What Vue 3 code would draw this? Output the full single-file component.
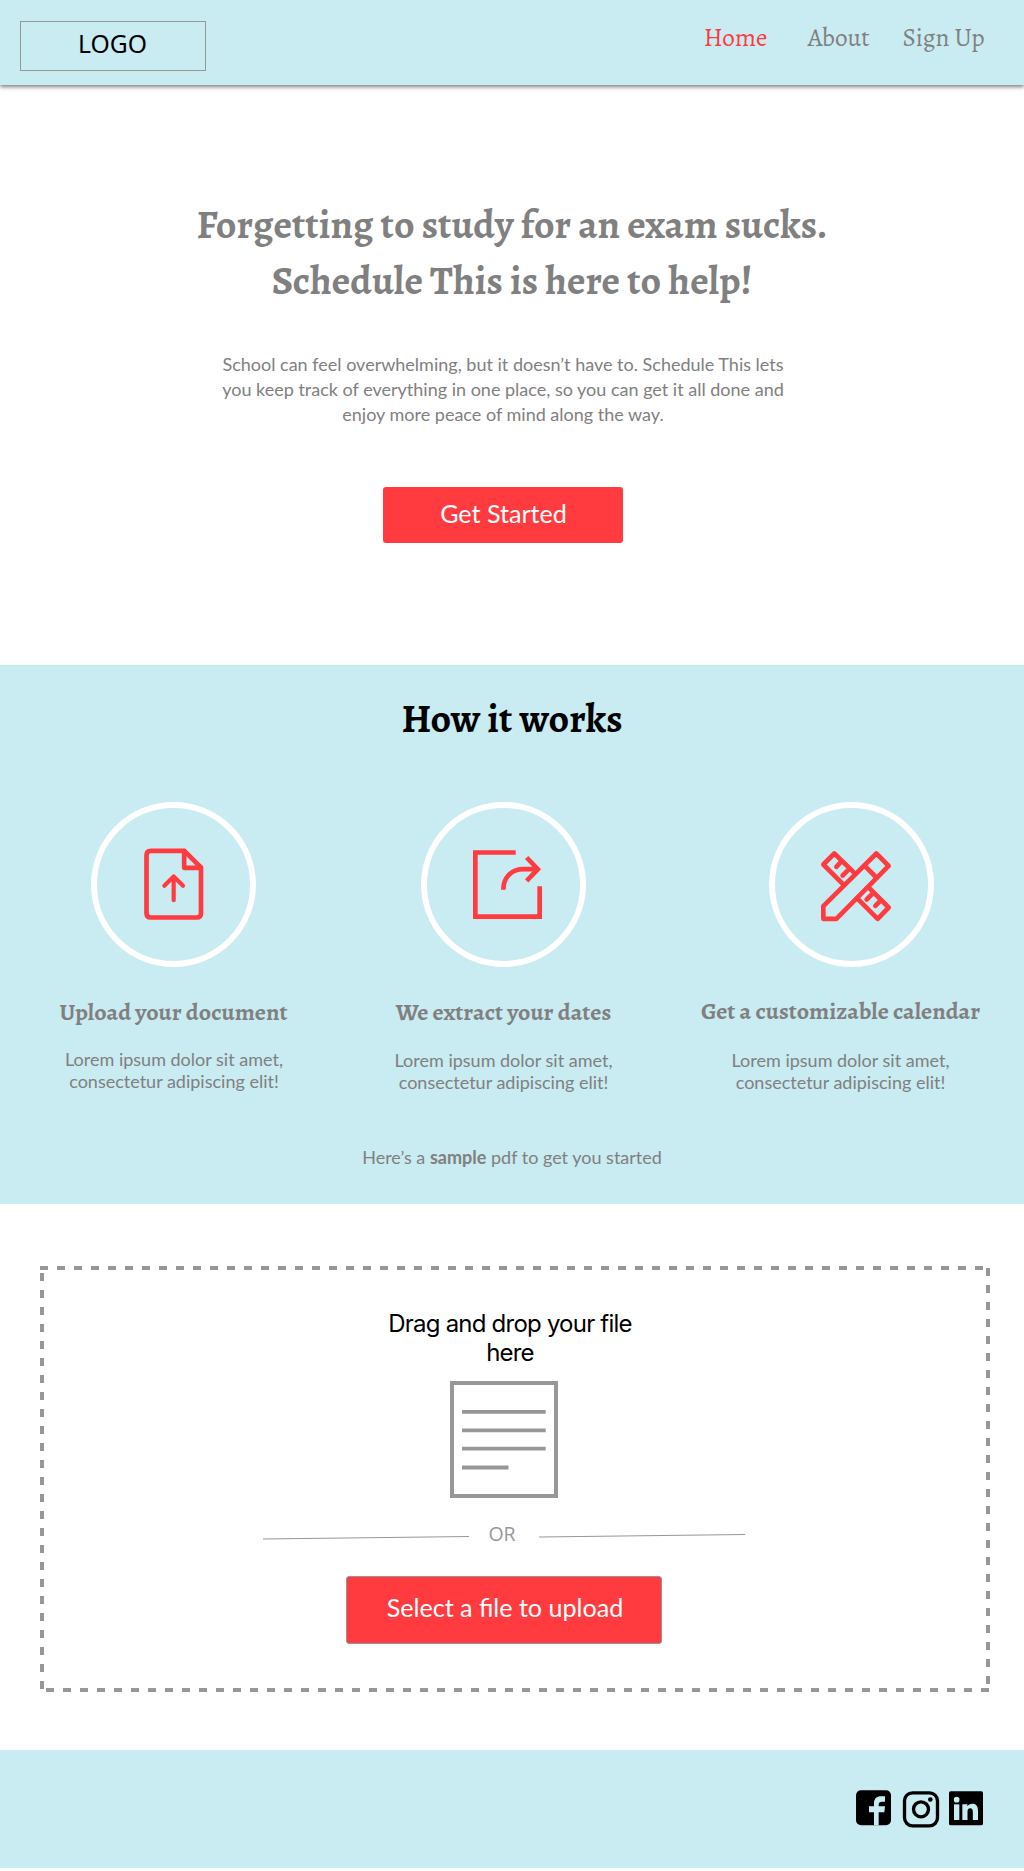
<script setup>
const links = [
  { label: 'Home', cls: 'home' },
  { label: 'About', cls: 'about' },
  { label: 'Sign Up', cls: 'signup' },
]
const steps = [
  { id: 'upload', title: 'Upload your document' },
  { id: 'extract', title: 'We extract your dates' },
  { id: 'calendar', title: 'Get a customizable calendar' },
]
</script>

<template>
  <div class="page">
    <header class="bar">
      <div class="logo">LOGO</div>
      <nav class="nav">
        <a v-for="l in links" :key="l.label" :class="l.cls">{{ l.label }}</a>
      </nav>
    </header>

    <section class="hero">
      <h1>Forgetting to study for an exam sucks.<br />Schedule This is here to help!</h1>
      <p class="intro">School can feel overwhelming, but it doesn’t have to. Schedule This lets<br />you keep track of everything in one place, so you can get it all done and<br />enjoy more peace of mind along the way.</p>
      <button class="btn start">Get Started</button>
    </section>

    <section class="how">
      <h2>How it works</h2>
      <div class="steps">
        <article v-for="s in steps" :key="s.id" class="step" :class="s.id">
          <svg class="ring" viewBox="33 35.5 495 495" width="165" height="165" fill="none" stroke="#ff3b3f">
            <circle cx="280.5" cy="283" r="238.5" stroke="#fff" stroke-width="18" />
            <g v-if="s.id === 'upload'" stroke-width="14" stroke-linecap="round" stroke-linejoin="round">
              <path d="M313 182H212q-12.500 0-12.500 13V369q0 13 12.500 13H350q13 0 13-13V232z" />
              <path d="M312.500 183V233H362" />
              <path d="M281 330V260M253 287l28-28 28 28" stroke-width="12.500" />
            </g>
            <g v-else-if="s.id === 'extract'" stroke-width="14">
              <path d="M317 187H196V379.500H389V288" />
              <path d="M280 299C280 262 304 237 340 237H380" />
              <path d="M350 202l33.500 35-33.500 35" />
            </g>
            <g v-else transform="translate(6 0)" stroke-width="14" stroke-linecap="round" stroke-linejoin="round">
              <path d="M190 386V348L349 190l37 37L229 386z" />
              <path d="M315 228l34 34" />
              <path d="M283 248L223 190l-33 33 61 61" />
              <path d="M241 217l-12 13M264 240l-16 16" />
              <path d="M325 291l61 61-33 34-62-62" />
              <path d="M337 311l-17 17M361 332l-15 15" />
            </g>
          </svg>
          <h3>{{ s.title }}</h3>
          <p>Lorem ipsum dolor sit amet,<br />consectetur adipiscing elit!</p>
        </article>
      </div>
      <p class="sample">Here’s a <b>sample</b> pdf to get you started</p>
    </section>

    <section class="drop">
      <svg class="dashes" width="950" height="428" viewBox="40 1265 950 428" stroke="#979797" stroke-width="4" stroke-dasharray="8 9">
        <path d="M40 1268H984" />
        <path d="M988 1268V1686" />
        <path d="M989 1690H46" />
        <path d="M42 1689V1272" />
      </svg>
      <p class="hint">Drag and drop your file<br />here</p>
      <svg class="doc" width="108" height="117" viewBox="450 1381 108 117" fill="none" stroke="#979797">
        <rect x="452" y="1383" width="104" height="113" stroke-width="4" />
        <path d="M462 1411.800h83.700M462 1430.300h83.700M462 1448.700h83.700M462 1467.500h46.500" stroke-width="3.800" />
      </svg>
      <div class="or">
        <svg class="l" width="206" height="5" viewBox="0 0 206 5"><path d="M0 4L206 1.500" stroke="#979797" /></svg>
        <span>OR</span>
        <svg width="206" height="5" viewBox="0 0 206 5"><path d="M0 4L206 1.500" stroke="#979797" /></svg>
      </div>
      <button class="btn select">Select a file to upload</button>
    </section>

    <footer class="foot">
      <svg width="128" height="38" viewBox="108 152 384 114">
        <rect x="108" y="153" width="105" height="105" rx="15" />
        <path fill="#c9ebf2" d="M162 258V219H147V201H162V192C162 178 170 171 183 171H195V187H187C179 187 176 190 176 197V201H195L193 219H176V258z" />
        <rect x="253.500" y="160.500" width="99" height="99" rx="24" fill="none" stroke="#000" stroke-width="10" />
        <circle cx="303" cy="210" r="22.500" fill="none" stroke="#000" stroke-width="10" />
        <circle cx="331" cy="180.500" r="7" />
        <rect x="387" y="156" width="102" height="102" rx="5" />
        <g fill="#c9ebf2">
          <circle cx="410" cy="181" r="8.500" />
          <path d="M402 195h16v47h-16z" />
          <path d="M427 195h15v6c3-5 8-8 15-8 12 0 17 8 17 21v28h-15.500v-25c0-6-2-10-8-10s-8 4-8 10v25H427z" />
        </g>
      </svg>
    </footer>
  </div>
</template>

<style>
body {
  margin: 0;
  background: #fff;
}
</style>

<style scoped>
.page {
  width: 1024px;
  height: 1871px;
  overflow: hidden;
  background: #fff;
  color: #808080;
  font-family: Lato, sans-serif;
  white-space: nowrap;
}
h1, h2, h3, p {
  margin: 0;
}
h1, h2, h3, .nav {
  font-family: Alegreya, 'Liberation Serif', serif;
}
svg {
  display: block;
  flex: none;
}
.bar {
  display: flex;
  justify-content: space-between;
  align-items: flex-start;
  height: 85px;
  box-sizing: border-box;
  padding: 21px 39.5px 0 20px;
  background: #c9ebf2;
  box-shadow: 0 2px 4px rgba(0, 0, 0, 0.5);
}
.logo {
  width: 186px;
  height: 50px;
  box-sizing: border-box;
  border: 1px solid #979797;
  color: #000;
  font: 24.7px/43px 'Noto Sans', sans-serif;
  text-align: center;
  text-indent: -1px;
}
.nav {
  display: flex;
  font-size: 25.3px;
  line-height: 30px;
  margin-top: 2px;
}
.home {
  color: #ff3b3f;
  margin-right: 40.5px;
}
.about {
  margin-right: 33px;
}
.hero {
  height: 580px;
  box-sizing: border-box;
  padding-top: 112px;
}
h1 {
  font-size: 40px;
  line-height: 56px;
  letter-spacing: 0.08px;
  text-align: center;
}
.intro {
  width: 1006px;
  margin-top: 43px;
  font-size: 18px;
  line-height: 25px;
  text-align: center;
}
.btn {
  display: block;
  box-sizing: border-box;
  border: 0;
  border-radius: 3px;
  background: #ff3b3f;
  color: #fff;
  font-family: Lato, sans-serif;
  font-size: 25.1px;
}
.start {
  width: 240px;
  height: 56px;
  margin: 60px 0 0 383px;
  padding: 0 0 4px 1px;
}
.how {
  height: 539px;
  box-sizing: border-box;
  padding-top: 30px;
  background: #c9ebf2;
  text-align: center;
}
h2 {
  color: #000;
  font-size: 40px;
  line-height: 48px;
  letter-spacing: 0.08px;
}
.steps {
  display: grid;
  grid-template-columns: 347px 313px 361px;
  margin-top: 59px;
}
.step {
  display: flex;
  flex-direction: column;
  align-items: center;
}
.step h3 {
  margin-top: 30px;
  font-size: 24px;
  line-height: 30px;
  letter-spacing: 0.03px;
}
.step p {
  margin-top: 22px;
  font-size: 18px;
  line-height: 22px;
}
.upload p {
  margin-top: 21px;
  padding-left: 1px;
}
.calendar .ring {
  margin-left: 22px;
}
.calendar h3 {
  margin-top: 29px;
}
.calendar p {
  margin-top: 23px;
}
.sample {
  margin-top: 53px;
  font-size: 18px;
  line-height: 22px;
}
.drop {
  position: relative;
  display: flex;
  flex-direction: column;
  align-items: center;
  width: 1007px;
  height: 546px;
  box-sizing: border-box;
  padding-top: 105px;
}
.dashes {
  position: absolute;
  left: 40px;
  top: 61px;
}
.hint {
  margin-left: 13px;
  color: #000;
  font-family: Inter, sans-serif;
  font-size: 24px;
  line-height: 29px;
  letter-spacing: -0.78px;
  text-align: center;
}
.doc {
  margin: 14px 0 0 1px;
}
.or {
  display: flex;
  align-items: center;
  margin-top: 24px;
  color: #979797;
  font: 19.5px/24px 'Open Sans', sans-serif;
}
.or span {
  width: 70px;
  box-sizing: border-box;
  padding-right: 3px;
  text-align: center;
}
.or .l {
  margin-top: 4px;
}
.or svg {
  position: relative;
  top: 1px;
}
.select {
  width: 316px;
  height: 68px;
  margin: 30px 0 0 1px;
  padding: 0 0 6px 2px;
  border: 1px solid #979797;
}
.foot {
  display: flex;
  justify-content: flex-end;
  height: 118px;
  box-sizing: border-box;
  padding: 40px 40px 0 0;
  background: #c9ebf2;
}
</style>
